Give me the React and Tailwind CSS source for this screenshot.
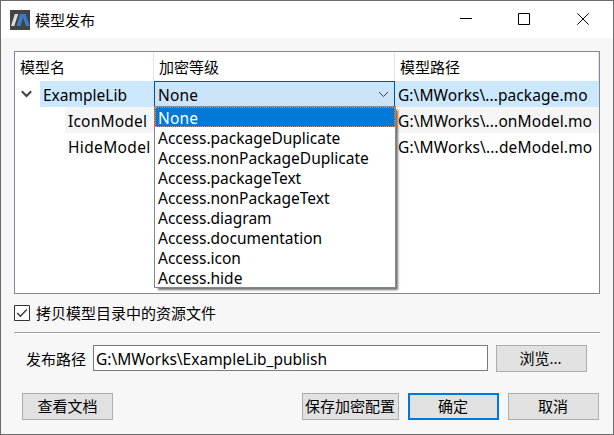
import React from 'react';

const levels = [
  'Access.packageDuplicate',
  'Access.nonPackageDuplicate',
  'Access.packageText',
  'Access.nonPackageText',
  'Access.diagram',
  'Access.documentation',
  'Access.icon',
  'Access.hide',
];

function Button({ children, className = '' }) {
  return (
    <button
      className={`flex h-[27px] shrink-0 items-center justify-center whitespace-nowrap bg-[#e1e1e1] pb-px ${className}`}
    >
      {children}
    </button>
  );
}

function WindowControls() {
  return (
    <svg className="h-[37px] w-[166px] shrink-0" viewBox="447 1 166 37" fill="none" stroke="#000">
      <path d="M460 18.5h12" />
      <path d="M518.5 13.5h11v11h-11z" />
      <path d="M577.3 13.3l11.4 11.4M588.7 13.3l-11.4 11.4" />
    </svg>
  );
}

function TitleBar() {
  return (
    <header className="flex h-[37px] shrink-0 items-center bg-white pl-[9px]">
      <svg className="size-5 shrink-0" viewBox="0 0 20 20">
        <path d="M0 0h20v20H0z" fill="#424344" />
        <path d="M4.8 4H8.2L4.3 16H1z" fill="#d9dddf" />
        <path d="M10 4h5.4l4.2 12h-3.6L13.2 7.8 10.4 16H6.6z" fill="#3c7bc5" />
      </svg>
      <h1 className="ml-[5px] grow">模型发布</h1>
      <WindowControls />
    </header>
  );
}

function LevelSelect() {
  return (
    <div className="relative h-[26px]">
      <div className="flex h-[26px] items-center justify-between border border-[#005499] bg-[#cce4f7] pl-[3px] pr-[5px]">
        <span className="h-[26px] leading-[28px] tracking-[0.2px]">None</span>
        <svg className="h-[7px] w-[11px]" viewBox="0 0 11 7" fill="none" stroke="#444">
          <path d="M1 1l4.5 4.5L10 1" />
        </svg>
      </div>
      <ul className="absolute left-0 top-[25px] z-10 w-[242px] border border-[#828790] bg-white shadow-[3px_3px_2px_-1px_rgba(0,0,0,0.55)]">
        <li className="h-5 border border-dotted border-[#ff8728] bg-[#0078d7] pl-[2px] leading-[20px] tracking-[0.2px] text-white">
          None
        </li>
        {levels.map((level) => (
          <li key={level} className="h-5 pl-[3px] leading-[22px]">
            {level}
          </li>
        ))}
      </ul>
    </div>
  );
}

function ModelTable() {
  return (
    <section className="h-[243px] shrink-0 border border-[#828790] bg-white">
      <div className="grid h-[29px] grid-cols-[139px_241px_204px] leading-[31px]">
        <div className="border-r border-[#e5e5e5] pl-[5px]">模型名</div>
        <div className="border-r border-[#e5e5e5] pl-[5px]">加密等级</div>
        <div className="border-r border-[#e5e5e5] pl-[5px]">模型路径</div>
      </div>
      <div className="text-[15.5px] leading-[28px]">
        <div className="grid h-[26px] grid-cols-[139px_241px_204px]">
          <div className="flex h-[26px] items-center">
            <svg className="ml-[6px] mr-[8px] h-[8px] w-[11px]" viewBox="0 0 11 8" fill="none" stroke="#404040" strokeWidth="2">
              <path d="M.8 1.3l4.7 4.7 4.7-4.7" />
            </svg>
            <div className="h-[26px] grow bg-[#cce8ff] pl-[3px]">ExampleLib</div>
          </div>
          <LevelSelect />
          <div className="h-[26px] bg-[#cce8ff] pl-[3px] tracking-[0.07px]">G:\MWorks\...package.mo</div>
        </div>
        <div className="grid h-[26px] grid-cols-[139px_241px_204px]">
          <div className="ml-[50px] h-[26px] bg-[#f5f5f5] pl-[3px] tracking-[0.2px]">IconModel</div>
          <div className="h-[26px] bg-[#f5f5f5]" />
          <div className="h-[26px] bg-[#f5f5f5] pl-[3px] tracking-[0.1px]">G:\MWorks\...onModel.mo</div>
        </div>
        <div className="grid h-[26px] grid-cols-[139px_241px_204px]">
          <div className="pl-[53px] tracking-[0.35px]">HideModel</div>
          <div />
          <div className="pl-[3px] tracking-[0.14px]">G:\MWorks\...deModel.mo</div>
        </div>
      </div>
    </section>
  );
}

export default function App() {
  return (
    <div className="flex h-[435px] w-[614px] flex-col overflow-hidden border border-[#6b6b6b] bg-[#f7f7f7] font-['Noto_Sans','Noto_Sans_CJK_SC',sans-serif] text-[15px] leading-5 text-black">
      <TitleBar />
      <main className="flex flex-col px-[13px] pt-[13px]">
        <ModelTable />
        <label className="mt-[11px] flex h-4 items-center">
          <svg className="size-4" viewBox="0 0 16 16" fill="none">
            <path d="M.5.5h15v15H.5z" fill="#fff" stroke="#333" />
            <path d="M3.2 8l3.2 3.3 6.4-6.8" stroke="#333" strokeWidth="1.3" />
          </svg>
          <span className="ml-[6px]">拷贝模型目录中的资源文件</span>
        </label>
        <div className="mt-[11px] h-[2px] border-b border-t border-b-white border-t-[#a0a0a0]" />
        <div className="mt-[11px] flex items-start pl-[12px]">
          <span className="mt-[4px] w-[67px]">发布路径</span>
          <div className="h-[26px] w-[395px] border border-[#7a7a7a] bg-white pl-[2px] text-[15.5px] leading-[26px]">
            G:\MWorks\ExampleLib_publish
          </div>
          <Button className="ml-[8px] w-[91px] border border-[#adadad] pr-[2px]">浏览...</Button>
        </div>
        <div className="mt-[21px] flex pl-[8px]">
          <Button className="w-[91px] border border-[#adadad]">查看文档</Button>
          <Button className="ml-[189px] w-[97px] border border-[#adadad] pr-px">保存加密配置</Button>
          <Button className="ml-[9px] w-[91px] border-2 border-[#0078d7] pr-px">确定</Button>
          <Button className="ml-[9px] w-[91px] border border-[#adadad] pr-px">取消</Button>
        </div>
      </main>
    </div>
  );
}
